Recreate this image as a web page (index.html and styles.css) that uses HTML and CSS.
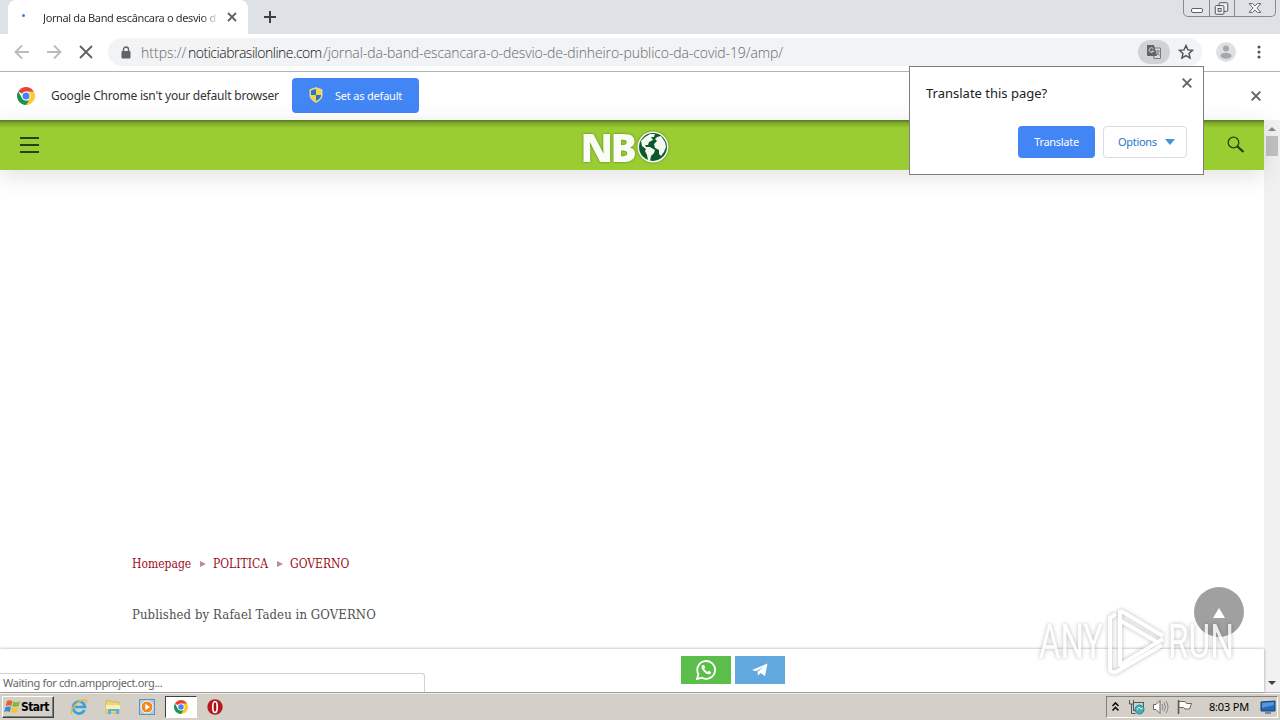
FILE: index.html
```html
<!DOCTYPE html>
<html lang="en">
  <head>
    <meta charset="utf-8">
    <title>Jornal da Band escâncara o desvio de dinheiro</title>
    <link rel="stylesheet" href="styles.css">
  </head>
  <body>
    <div class="tabstrip">
      <div class="tab">
        <span class="loading-dot"></span>
        <span class="tab-title">Jornal da Band escâncara o desvio d</span>
        <svg class="tab-close" width="10" height="10" viewBox="0 0 10 10"><path d="M1 1l8 8M9 1l-8 8" stroke="#5f6368" stroke-width="1.8"/></svg>
      </div>
      <svg class="new-tab" width="14" height="14" viewBox="0 0 14 14"><path d="M7 1v12M1 7h12" stroke="#3c4043" stroke-width="2"/></svg>
      <div class="window-buttons">
        <svg width="25" height="16" viewBox="0 0 25 16"><rect x="7.500" y="8.500" width="11" height="4" rx="1.500" fill="#fff" stroke="#5a5f6b"/></svg>
        <svg width="25" height="16" viewBox="0 0 25 16"><g fill="#eef0f4" stroke="#4a4f5b"><rect x="9.500" y="2.500" width="9" height="9" rx="1"/><rect x="5.500" y="5.500" width="9" height="9" rx="1"/><rect x="8.500" y="8.500" width="3" height="3"/></g></svg>
        <svg width="41" height="16" viewBox="0 0 41 16"><path d="M14.500 3.500h3.500l2.500 2.500 2.500-2.500h3.500l-4 4.500 4 4.500h-3.500l-2.500-2.500-2.500 2.500h-3.500l4-4.500z" fill="#fff" stroke="#5a5f6b"/></svg>
      </div>
    </div>

    <div class="toolbar">
      <svg class="nav-icon" width="16" height="16" viewBox="0 0 16 16"><path d="M15 8H2M8 1.500L1.500 8 8 14.500" fill="none" stroke="#b9bbbe" stroke-width="1.800"/></svg>
      <svg class="nav-icon" width="16" height="16" viewBox="0 0 16 16"><path d="M1 8h13M8 1.500L14.500 8 8 14.500" fill="none" stroke="#b9bbbe" stroke-width="1.800"/></svg>
      <svg class="nav-icon" width="16" height="16" viewBox="0 0 16 16"><path d="M2 2l12 12M14 2L2 14" stroke="#5f6368" stroke-width="1.900"/></svg>
      <div class="omnibox">
        <svg width="10" height="13" viewBox="0 0 10 13"><rect x="0.500" y="5" width="9" height="7.500" rx="1" fill="#5f6368"/><path d="M2.500 5.500V3.500a2.500 2.500 0 0 1 5 0v2" fill="none" stroke="#5f6368" stroke-width="1.400"/></svg>
        <div class="url"><span class="scheme">https://</span><span class="domain">noticiabrasilonline.com</span><span class="path">/jornal-da-band-escancara-o-desvio-de-dinheiro-publico-da-covid-19/amp/</span></div>
        <div class="translate-chip">
          <svg width="16" height="16" viewBox="0 0 16 16"><path d="M7 4h7.500v10.500H8z" fill="#d9dbde" stroke="#777a7e"/><path d="M1 1h7l3 11H2a1 1 0 0 1-1-1z" fill="#5f6368"/><path d="M7.300 4.700a2.300 2.300 0 1 0 .3 2.300H5.500" fill="none" stroke="#dcdde0"/><path d="M9.500 7h4M11.500 6v1M13 7c0 2-1.500 3.500-3 4M10.500 8l3 3.500" fill="none" stroke="#777a7e"/></svg>
        </div>
        <svg class="star" width="16" height="16" viewBox="0 0 16 16"><path d="M8 1.500l1.900 4.400 4.700.4-3.600 3.100 1.100 4.700L8 11.600l-4.100 2.500L5 9.400 1.400 6.300l4.700-.4z" fill="none" stroke="#4d5156" stroke-width="1.400"/></svg>
      </div>
      <svg class="avatar" width="20" height="20" viewBox="0 0 20 20"><circle cx="10" cy="10" r="10" fill="#dfe0e2"/><circle cx="10" cy="6.500" r="3" fill="#a5a8ab"/><ellipse cx="10" cy="13.700" rx="5.500" ry="3" fill="#a5a8ab"/></svg>
      <svg class="menu-dots" width="4" height="14" viewBox="0 0 4 14"><g fill="#4d5156"><circle cx="2" cy="2" r="1.500"/><circle cx="2" cy="7" r="1.500"/><circle cx="2" cy="12" r="1.500"/></g></svg>
    </div>

    <div class="infobar">
      <svg class="chrome-logo" width="18" height="18" viewBox="0 0 18 18"><path d="M9 9L1.210 4.500A9 9 0 0 1 16.790 4.500z" fill="#ea4335"/><path d="M9 9V4.500h7.790A9 9 0 0 1 9 18z" fill="#fbc934"/><path d="M1.210 4.500L5.100 11.250 9 13.500h3L9 18A9 9 0 0 1 1.210 4.500z" fill="#1a9350"/><circle cx="9" cy="9" r="4.500" fill="#fff"/><circle cx="9" cy="9" r="3.500" fill="#4285f4"/></svg>
      <span class="infobar-text">Google Chrome isn't your default browser</span>
      <div class="default-button">
        <svg width="14" height="16" viewBox="0 0 14 16"><path d="M7 .7l6 2V8c0 3.500-2.500 5.700-6 7.300C3.500 13.700 1 11.500 1 8V2.700z" fill="#f7d348" stroke="#e3ddb0"/><path d="M7 2v6H2V3.500zM7 8h5c0 3-2 4.500-5 6z" fill="#2d74c4"/></svg>
        <span>Set as default</span>
      </div>
      <svg class="infobar-close" width="10" height="10" viewBox="0 0 10 10"><path d="M.700.700l8.600 8.600M9.300.700L.700 9.300" stroke="#5f6368" stroke-width="1.900"/></svg>
    </div>

    <div class="viewport">
      <div class="page">
        <div class="site-header">
          <div class="hamburger"><i></i><i></i><i></i></div>
          <div class="site-logo">
            <span>NB</span>
            <svg width="32" height="32" viewBox="0 0 32 32"><circle cx="16" cy="16" r="14.700" fill="#0c572d" stroke="#f4faee" stroke-width="1.500"/><path d="M4 10l4-4 5-3 5 0-1 3-3 0 2 3-4 2-1 3-3 0 1 2 4 0 5 3-1 3-3 3-1 5-2-1-1-5-2-4 1-2-4-3z" fill="#f4faee"/><path d="M20 6l4-1 4 6 1 5-2 5-3 4-2-2 0-4-4-2-1-4 3-3-2-2z" fill="#f4faee"/></svg>
          </div>
          <svg class="search-icon" width="18" height="18" viewBox="0 0 18 18"><circle cx="6.500" cy="6.500" r="5.300" fill="none" stroke="#24420f" stroke-width="1.300"/><path d="M10.500 10.500l6 5.500" stroke="#24420f" stroke-width="2.300"/></svg>
        </div>
        <div class="article">
          <div class="breadcrumb"><span class="crumb-home">Homepage</span><i></i><span class="crumb-section">POLITICA</span><i></i><span class="crumb-topic">GOVERNO</span></div>
          <div class="byline">Published by Rafael Tadeu in GOVERNO</div>
        </div>
        <div class="share-bar">
          <div class="share whatsapp">
            <svg width="22" height="22" viewBox="0 0 22 22"><path d="M2 20l1.400-4.800A8.900 8.900 0 1 1 6.900 18.700z" fill="none" stroke="#fff" stroke-width="1.800"/><path d="M7.500 6c-1.500 1-1.200 3.300.5 5.500 2 2.700 4.500 4.200 6.500 3.700 1.300-.4 1.700-1.500 1.500-2.300l-2.300-1.200-1.200 1.200c-1.600-.6-2.700-1.800-3.300-3.100l1-1.200L9.100 6z" fill="#fff"/></svg>
          </div>
          <div class="share telegram">
            <svg width="16" height="14" viewBox="0 0 16 14"><path d="M0 7L15.500.500 13 13 8.500 10 6 12.500 5.500 8.700 12 3.500 4 8.200z" fill="#fff"/></svg>
          </div>
        </div>
        <div class="to-top"></div>
        <div class="status-bubble"><span>Waiting for cdn.ampproject.org...</span></div>
      </div>
      <div class="scrollbar">
        <i class="arrow-up"></i>
        <div class="thumb"></div>
        <i class="arrow-down"></i>
      </div>
    </div>

    <div class="taskbar">
      <div class="start-button">
        <svg width="17" height="16" viewBox="0 0 17 16"><path d="M3 2c2-1 3.500-1 5.500.2L7.300 7C5.500 6 4 6 1.700 7z" fill="#e8622c"/><path d="M9.500 2.600c2 1.200 4 1 6.500 0L14.700 7c-2 1-4.500 1-6.400.2z" fill="#7db93b"/><path d="M1.400 8.200c2-1 4-1 5.600 0L5.700 13c-1.700-1-3.400-1-5.500 0z" fill="#3c87cf"/><path d="M8 8.500c2 1.200 4 1 6.400 0L13 13c-2 1-4.400 1-6.300.2z" fill="#f4c431"/></svg>
        <span>Start</span>
      </div>
      <div class="quick-launch">
        <svg width="18" height="18" viewBox="0 0 18 18"><path d="M14.500 12a6 6 0 1 1 .5-3H5" fill="none" stroke="#36a3df" stroke-width="2.700"/><path d="M2 16C-1 13 6 4 13 2c4-1 4 1 3 3" fill="none" stroke="#e8b93c" stroke-width="1.500"/></svg>
        <svg width="18" height="18" viewBox="0 0 18 18"><path d="M2 3h5l1 1h7v11H2z" fill="#f0d67b" stroke="#d8b950"/><path d="M2 7h14v4H2z" fill="#fbefae"/><path d="M4 16v-5h11v5h-3v-3H7v3z" fill="#5cb0dd"/></svg>
        <svg width="18" height="18" viewBox="0 0 18 18"><rect x="1.500" y="1.500" width="15" height="15" fill="#a9cdea" stroke="#5c92bd"/><circle cx="9" cy="9" r="6" fill="#f28a1d" stroke="#fff"/><path d="M7.300 5.800v6.400L12 9z" fill="#fff"/></svg>
        <div class="task-active">
          <svg width="14" height="14" viewBox="0 0 18 18"><path d="M9 9L1.210 4.500A9 9 0 0 1 16.790 4.500z" fill="#ea4335"/><path d="M9 9V4.500h7.790A9 9 0 0 1 9 18z" fill="#fbc934"/><path d="M1.210 4.500L5.100 11.250 9 13.500h3L9 18A9 9 0 0 1 1.210 4.500z" fill="#1a9350"/><circle cx="9" cy="9" r="4.500" fill="#fff"/><circle cx="9" cy="9" r="3.500" fill="#4285f4"/></svg>
        </div>
        <svg class="opera" width="16" height="16" viewBox="0 0 16 16"><circle cx="8" cy="8" r="7.700" fill="#b91720"/><ellipse cx="8" cy="8" rx="2.200" ry="5.500" fill="#a01018" stroke="#fff" stroke-width="1.700"/></svg>
      </div>
      <div class="tray">
        <svg width="9" height="12" viewBox="0 0 9 12"><path d="M1.500 5l3-3 3 3M1.500 9.500l3-3 3 3" fill="none" stroke="#111" stroke-width="1.600"/></svg>
        <svg class="tray-net" width="17" height="16" viewBox="0 0 17 16"><path d="M1.500 1v4h4V1M3.500 5v9.500h4" fill="none" stroke="#555"/><rect x="5.500" y="3.500" width="10" height="8" fill="#b8dce2" stroke="#555"/><circle cx="11.500" cy="10.500" r="4.500" fill="#46aeb8" stroke="#3a828b"/><path d="M9 11l2-3 2 2 2-1" fill="none" stroke="#dff4f4"/></svg>
        <svg class="tray-sound" width="17" height="16" viewBox="0 0 17 16"><path d="M1.500 5.500h2.500l4-4v13l-4-4H1.500z" fill="#fff" stroke="#666"/><path d="M10 5q2 3 0 6M12 3.500q3 4.500 0 9M14 2q4 6 0 12" fill="none" stroke="#888"/></svg>
        <svg class="tray-flag" width="17" height="16" viewBox="0 0 17 16"><path d="M2.500 1v14" stroke="#555" stroke-width="1.500"/><path d="M3 2.500h6l1.500 2h5l-2 5.500H9L7.500 8.500H3z" fill="#fff" stroke="#666"/></svg>
        <span class="clock">8:03 PM</span>
        <svg width="16" height="14" viewBox="0 0 16 14"><path d="M1 2l14-1v10H1z" fill="#2468bd" stroke="#17427e"/><path d="M2 3l12-1v3L2 8z" fill="#5597dc"/><path d="M5 13h6" stroke="#345"/></svg>
      </div>
    </div>

    <div class="translate-popup">
      <div class="popup-head">
        <span>Translate this page?</span>
        <svg width="10" height="10" viewBox="0 0 10 10"><path d="M.700.700l8.600 8.600M9.300.700L.700 9.300" stroke="#5f6368" stroke-width="1.900"/></svg>
      </div>
      <div class="popup-buttons">
        <div class="btn-translate">Translate</div>
        <div class="btn-options"><span>Options</span><i></i></div>
      </div>
    </div>

    <svg class="watermark" width="230" height="76" viewBox="0 0 230 76">
      <g fill="#fff">
        <text x="9" y="54" textLength="64" lengthAdjust="spacingAndGlyphs">ANY</text>
        <text x="138" y="54" textLength="66" lengthAdjust="spacingAndGlyphs">RUN</text>
      </g>
      <g fill="none" stroke="#fff" stroke-width="4" stroke-linejoin="round">
        <path d="M90 36V8q1-1 3 0l40 24M91 17l38 22"/>
        <path d="M90 34v27l43-26M80 12v54q2 3 6 2l46-27M80 14l6-4"/>
      </g>
    </svg>
  </body>
</html>
```
FILE: styles.css
```css
* {
  box-sizing: border-box;
}

body {
  margin: 0;
  width: 1280px;
  height: 720px;
  overflow: hidden;
  display: flex;
  flex-direction: column;
  position: relative;
  background: #fff;
  font-family: "Noto Sans", sans-serif;
  font-size: 12px;
  color: #333;
}

svg {
  display: block;
  flex: none;
}

span {
  white-space: nowrap;
}

/* tabs */
.tabstrip {
  height: 34px;
  flex: none;
  display: flex;
  background: #dee1e6;
  padding-left: 8px;
}

.tab {
  width: 240px;
  height: 34px;
  background: #fff;
  border-radius: 8px 8px 0 0;
  display: flex;
  align-items: center;
  padding-left: 14px;
}

.loading-dot {
  width: 3px;
  height: 3px;
  border-radius: 2px;
  background: #3f7fd0;
  margin-bottom: 3px;
}

.tab-title {
  width: 176px;
  margin-left: 18px;
  font-size: 11px;
  letter-spacing: -0.36px;
  -webkit-mask-image: linear-gradient(to right, #000 90%, transparent);
}

.tab-close {
  margin-left: 8px;
}

.new-tab {
  margin: 10px 0 0 15px;
}

.window-buttons {
  margin-left: auto;
  margin-right: 4px;
  height: 17px;
  display: flex;
  border: 1px solid #84899a;
  border-top: none;
  border-radius: 0 0 5px 5px;
}

.window-buttons svg + svg {
  border-left: 1px solid #84899a;
}

/* toolbar */
.toolbar {
  height: 38px;
  flex: none;
  display: flex;
  align-items: center;
  padding: 0 0 1px 14px;
  border-bottom: 1px solid #b2b4b8;
}

.nav-icon {
  margin-right: 16px;
}

.omnibox {
  width: 1094px;
  height: 28px;
  margin-left: -2px;
  border-radius: 14px;
  background: #f1f3f4;
  display: flex;
  align-items: center;
  padding-left: 13px;
}

.url {
  display: flex;
  flex: 1;
  margin-left: 10px;
  font-size: 14px;
  color: #66696d;
  font-family: "Open Sans", sans-serif;
  font-weight: 300;
}

.scheme {
  width: 47px;
}

.domain {
  width: 135px;
  color: #111;
  letter-spacing: -0.49px;
}

.path {
  letter-spacing: -0.1px;
}

.translate-chip {
  width: 32px;
  height: 24px;
  border-radius: 12px;
  background: #d0d3d6;
  display: flex;
  align-items: center;
  justify-content: center;
}

.star {
  margin: 0 8px;
}

.avatar {
  margin-left: 14px;
}

.menu-dots {
  margin-left: 21px;
}

/* default browser bar */
.infobar {
  height: 48px;
  flex: none;
  display: flex;
  align-items: center;
  padding: 0 0 1px 17px;
}

.infobar-text {
  width: 228px;
  margin: 0 13px 0 16px;
  font-size: 12px;
  letter-spacing: -0.2px;
}

.default-button {
  width: 127px;
  height: 35px;
  border-radius: 4px;
  background: #4285f4;
  color: #fff;
  display: flex;
  align-items: center;
  padding: 0 0 1px 17px;
  gap: 12px;
  font-size: 11px;
  letter-spacing: -0.2px;
}

.infobar-close {
  margin-left: auto;
  margin-right: 19px;
}

/* web page */
.viewport {
  height: 572px;
  flex: none;
  display: flex;
}

.page {
  width: 1264px;
  display: flex;
  flex-direction: column;
  position: relative;
}

.site-header {
  height: 50px;
  flex: none;
  background: linear-gradient(#587522, #7fa82c 3px, #9acd32 8px);
  box-shadow: 0 6px 24px rgba(0,0,0,.12);
  display: flex;
  align-items: center;
  justify-content: space-between;
  padding: 0 19px 0 20px;
}

.hamburger {
  width: 19px;
  display: flex;
  flex-direction: column;
  gap: 5px;
}

.hamburger i {
  height: 2px;
  background: #24420f;
}

.site-logo {
  display: flex;
  align-items: center;
  margin-top: 3px;
  margin-right: 17px;
  filter: drop-shadow(0 0 1px #587b20);
}

.site-logo span {
  width: 56px;
  font: 800 39px/36px "Open Sans", sans-serif;
  letter-spacing: -2.5px;
  color: #fafdf5;
}

.article {
  flex: 1;
  padding: 386px 0 0 132px;
  font-family: "DejaVu Serif Condensed", "DejaVu Serif", serif;
  font-size: 12px;
  line-height: 16px;
}

.breadcrumb {
  display: flex;
  align-items: center;
  color: #9b0a20;
}

.breadcrumb i {
  border: 3px solid transparent;
  border-left: 6px solid #c08a92;
  border-right: none;
  margin: 0 7px 0 8px;
}

.crumb-home {
  width: 60px;
}

.crumb-section {
  width: 56px;
}

.byline {
  margin-top: 35px;
  font-size: 13px;
  letter-spacing: 0.1px;
  color: #505050;
}

.share-bar {
  height: 43px;
  flex: none;
  display: flex;
  gap: 4px;
  padding: 7px 0 0 681px;
  background: #fff;
  box-shadow: 0 0 3px rgba(0,0,0,.35);
}

.share {
  width: 50px;
  height: 28px;
  display: flex;
  align-items: center;
  justify-content: center;
}

.whatsapp {
  background: #5cbe4a;
}

.telegram {
  background: #61a8de;
}

.to-top {
  position: absolute;
  right: 20px;
  bottom: 55px;
  width: 50px;
  height: 50px;
  border-radius: 50%;
  background: #a0a0a0;
}

.to-top::after {
  content: "";
  position: absolute;
  left: 19px;
  top: 21px;
  border: 6px solid transparent;
  border-bottom: 10px solid #fff;
  border-top: none;
}

.status-bubble {
  position: absolute;
  left: 0;
  bottom: 0;
  width: 425px;
  height: 19px;
  border: 1px solid #d2d2d2;
  border-left: none;
  border-bottom: none;
  border-radius: 0 3px 0 0;
  background: #fff;
  padding-left: 3px;
  font-size: 11px;
  line-height: 18px;
  letter-spacing: -0.35px;
  color: #666;
}

.scrollbar {
  width: 16px;
  background: #f1f1f1;
  display: flex;
  flex-direction: column;
  align-items: center;
}

.arrow-up {
  margin-top: 7px;
  border: 4px solid transparent;
  border-bottom: 4px solid #8b8b8b;
  border-top: none;
}

.thumb {
  width: 12px;
  height: 20px;
  margin-top: 5px;
  background: #c1c1c1;
}

.arrow-down {
  margin-top: auto;
  margin-bottom: 7px;
  border: 4px solid transparent;
  border-top: 4px solid #404040;
  border-bottom: none;
}

/* taskbar */
.taskbar {
  height: 28px;
  flex: none;
  display: flex;
  align-items: center;
  background: #d4d0c8;
  border-top: 1px solid #b9b6af;
  box-shadow: inset 0 1px #fff;
  padding: 0 2px;
}

.start-button {
  width: 52px;
  height: 22px;
  display: flex;
  align-items: center;
  border: 1px solid #fff;
  border-right-color: #404040;
  border-bottom-color: #404040;
  box-shadow: inset -1px -1px #808080;
  padding-left: 1px;
  font: bold 12px "DejaVu Sans Condensed", sans-serif;
  color: #000;
  letter-spacing: -0.6px;
}

.quick-launch {
  display: flex;
  align-items: center;
  margin-left: 16px;
  gap: 16px;
}

.task-active {
  width: 32px;
  height: 22px;
  margin-left: -7px;
  background: #fff;
  border: 1px solid #404040;
  border-right-color: #fff;
  border-bottom-color: #fff;
  display: flex;
  align-items: center;
  justify-content: center;
}

.opera {
  margin-left: -6px;
}

.tray {
  width: 172px;
  height: 22px;
  margin-left: auto;
  display: flex;
  align-items: center;
  border: 1px solid #808080;
  border-right-color: #fff;
  border-bottom-color: #fff;
  padding-left: 4px;
}

.tray-net {
  margin-left: 8px;
}

.tray-sound,
.tray-flag {
  margin-left: 7px;
}

.clock {
  width: 40px;
  margin: 0 11px 0 16px;
  font-size: 11px;
  letter-spacing: -0.2px;
  color: #000;
}

/* translate bubble */
.translate-popup {
  position: absolute;
  left: 909px;
  top: 66px;
  width: 295px;
  height: 109px;
  border: 1px solid #7f7f7f;
  background: #fff;
}

.popup-head {
  display: flex;
  justify-content: space-between;
  padding: 11px 11px 0 16px;
  height: 59px;
  font-size: 13px;
  line-height: 30px;
  color: #202124;
}

.popup-buttons {
  display: flex;
  justify-content: flex-end;
  gap: 8px;
  padding-right: 16px;
  font-size: 11px;
  letter-spacing: -0.3px;
}

.btn-translate {
  width: 77px;
  height: 32px;
  border-radius: 4px;
  background: #4285f4;
  color: #fff;
  line-height: 32px;
  text-align: center;
}

.btn-options {
  width: 84px;
  height: 32px;
  border: 1px solid #dadce0;
  border-radius: 4px;
  display: flex;
  align-items: center;
  justify-content: space-between;
  padding: 0 11px 1px 14px;
  color: #2a76c8;
}

.btn-options i {
  border: 5px solid transparent;
  border-top: 6px solid #4a90e0;
  border-bottom: none;
}

.watermark {
  position: absolute;
  left: 1030px;
  top: 604px;
  filter: drop-shadow(0 0 2px rgba(0,0,0,.35));
  opacity: .8;
}

.watermark text {
  font: 400 49px Roboto, sans-serif;
}
```
